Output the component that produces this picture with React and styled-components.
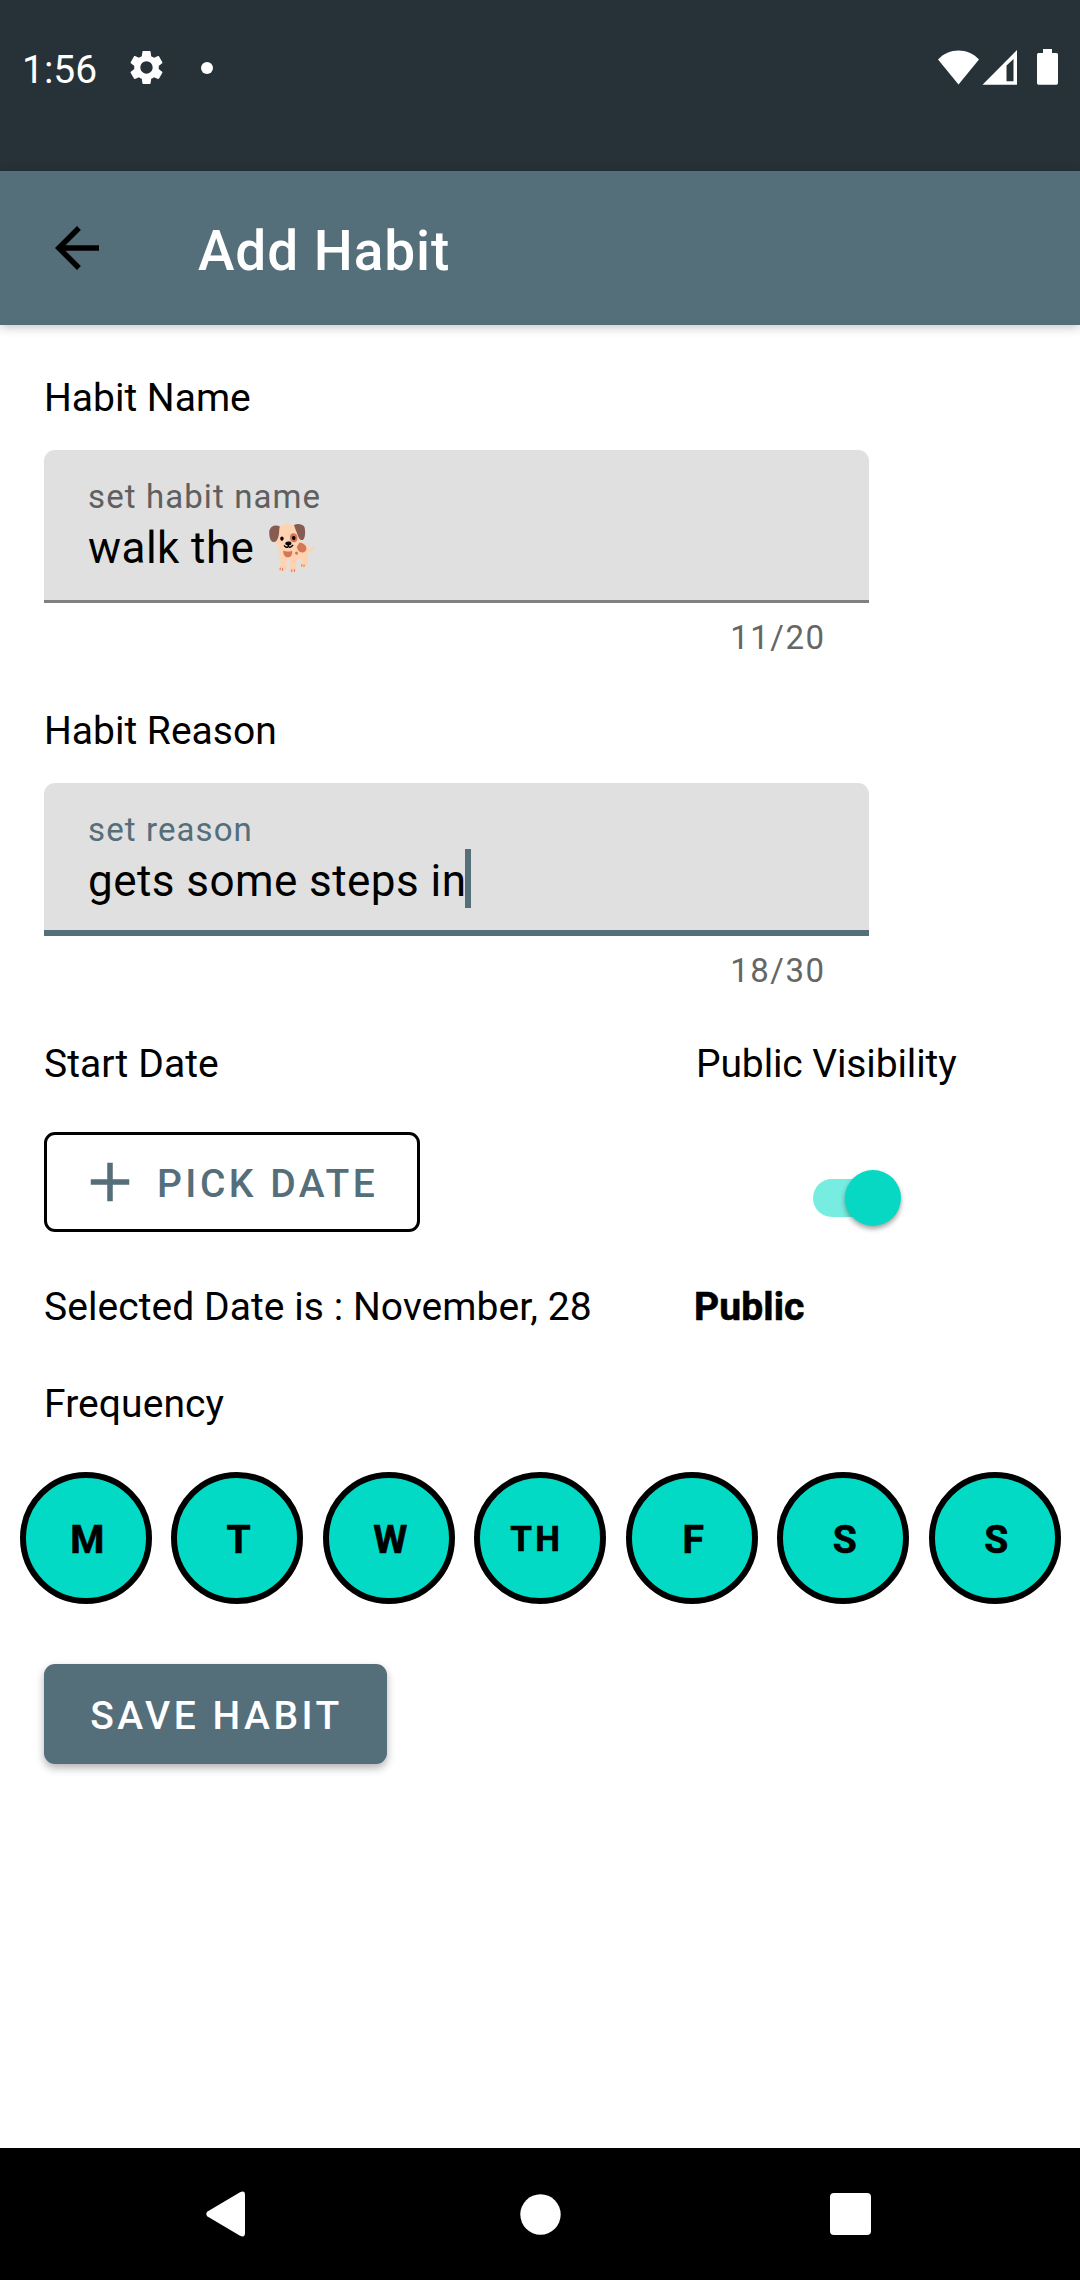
import React from "react";
import styled, { createGlobalStyle } from "styled-components";

const slate = "#546e7a";
const teal = "#03dac5";

const GlobalStyle = createGlobalStyle`
  * { box-sizing: border-box; }
  body {
    margin: 0;
    background: #fff;
    font-family: Roboto, "Noto Sans", sans-serif;
    color: #000;
  }
`;

const Screen = styled.div`
  width: 1080px;
  height: 2280px;
  display: flex;
  flex-direction: column;
  background: #fff;
  overflow: hidden;
`;

const StatusBar = styled.header`
  height: 171px;
  flex: none;
  padding: 42px 17px 0 22px;
  display: flex;
  justify-content: space-between;
  align-items: flex-start;
  background: #263238;
  color: #fff;
`;

const StatusGroup = styled.div`
  display: flex;
  align-items: center;
  height: 51px;
`;

const Clock = styled.span`
  width: 104px;
  padding-top: 5px;
  font-size: 39px;
  line-height: 54px;
`;

const Dot = styled.span`
  width: 12px;
  height: 12px;
  margin-left: 34px;
  border-radius: 50%;
  background: #fff;
`;

const StatusIcons = styled.svg`
  display: block;
`;

const AppBar = styled.div`
  height: 154px;
  flex: none;
  padding-left: 44px;
  display: flex;
  align-items: center;
  background: ${slate};
  box-shadow: 0 2px 10px rgba(0, 0, 0, 0.24);
`;

const Title = styled.h1`
  margin: 5px 0 0 88px;
  font-size: 55px;
  font-weight: 500;
  line-height: 64px;
  letter-spacing: 0.9px;
  color: #fff;
`;

const Form = styled.main`
  flex: 1;
  padding: 47px 0 0 44px;
`;

const Section = styled.section`
  height: 333px;
  width: 825px;
`;

const Label = styled.div`
  height: 52px;
  font-size: 39px;
  line-height: 52px;
  white-space: nowrap;
  font-weight: ${(p) => (p.$strong ? 700 : 400)};
  -webkit-text-stroke: ${(p) => (p.$strong ? 0.6 : 0)}px #000;
  letter-spacing: ${(p) => p.$tracking || 0}px;
  margin-top: ${(p) => p.$gap || 0}px;
  margin-left: ${(p) => p.$shift || 0}px;
`;

const Field = styled.div`
  height: 153px;
  margin-top: 26px;
  padding: 27px 44px 0;
  border-radius: 11px 11px 0 0;
  background: linear-gradient(
    to top,
    ${(p) => (p.$focused ? slate : "#808080")} ${(p) => (p.$focused ? 6 : 3)}px,
    #e0e0e0 ${(p) => (p.$focused ? 6 : 3)}px
  );
`;

const Hint = styled.div`
  height: 39px;
  font-size: 33px;
  line-height: 40px;
  letter-spacing: 1.1px;
  color: ${(p) => (p.$focused ? slate : "#5f5f5f")};
`;

const Value = styled.div`
  display: flex;
  align-items: flex-start;
  height: 59px;
  font-size: 44px;
  line-height: 65px;
  letter-spacing: 0.44px;
  white-space: pre;
`;

const Caret = styled.span`
  width: 6px;
  height: 59px;
  margin-left: -1px;
  background: ${slate};
`;

const Counter = styled.div`
  margin-top: 15px;
  padding-right: 43.5px;
  text-align: right;
  font-size: 33px;
  line-height: 40px;
  letter-spacing: 1.5px;
  color: #666;
`;

const Split = styled.div`
  display: grid;
  grid-template-columns: 652px 1fr;
`;

const OutlinedButton = styled.button`
  display: flex;
  align-items: center;
  gap: 14px;
  width: 376px;
  height: 100px;
  margin: 42px 0 0;
  padding: 0 0 0 30px;
  border: 3px solid #000;
  border-radius: 11px;
  background: #fff;
  color: ${slate};
  font: 500 39px/52px Roboto, sans-serif;
  letter-spacing: 3.48px;
  white-space: nowrap;
`;

const ButtonText = styled.span`
  padding-top: 4px;
`;

const Switch = styled.div`
  display: flex;
  align-items: center;
  width: 88px;
  height: 56px;
  margin: 80px 0 0 117px;
`;

const Track = styled.span`
  width: 80px;
  height: 38px;
  border-radius: 19px;
  background: #77ece0;
`;

const Thumb = styled.span`
  width: 56px;
  height: 56px;
  margin-left: -48px;
  border-radius: 50%;
  background: #06d8c3;
  box-shadow: 0 3px 5px rgba(0, 0, 0, 0.36);
`;

const Days = styled.div`
  display: flex;
  gap: 19.5px;
  margin: 42px 0 0 -24.3px;
`;

const Day = styled.button`
  width: 132px;
  height: 132px;
  flex: none;
  display: flex;
  align-items: center;
  justify-content: center;
  padding: 4px 0 0 ${(p) => (p.$small ? 0 : 3)}px;
  border: 6px solid #000;
  border-radius: 50%;
  background: ${teal};
  color: #000;
  font: 700 ${(p) => (p.$small ? 35 : 39)}px/52px Roboto, sans-serif;
  -webkit-text-stroke: 0.6px #000;
  letter-spacing: ${(p) => (p.$small ? 3.2 : 0)}px;
  text-indent: ${(p) => (p.$small ? -7 : 0)}px;
`;

const SaveButton = styled.button`
  width: 343px;
  height: 100px;
  margin: 60px 0 0;
  padding: 4px 0 0 2px;
  border: 0;
  border-radius: 11px;
  background: ${slate};
  color: #fff;
  font: 500 39px/52px Roboto, sans-serif;
  letter-spacing: 3.5px;
  white-space: nowrap;
  box-shadow: 0 4px 8px rgba(0, 0, 0, 0.3);
`;

const NavBar = styled.nav`
  height: 132px;
  flex: none;
  display: flex;
  align-items: center;
  justify-content: space-between;
  padding: 0 209px 0 206px;
  background: #000;
`;

const HomeIcon = styled.svg`
  margin-left: 5px;
`;

const days = ["M", "T", "W", "TH", "F", "S", "S"];

const Gear = () => (
  <svg width="41" height="41" viewBox="0 0 24 24" fill="#fff">
    <path d="M19.14 12.94c.04-.3.06-.61.06-.94 0-.32-.02-.64-.07-.94l2.03-1.58c.18-.14.23-.41.12-.61l-1.92-3.32c-.12-.22-.37-.29-.59-.22l-2.39.96c-.5-.38-1.03-.7-1.62-.94l-.36-2.54c-.04-.24-.24-.41-.48-.41h-3.84c-.24 0-.43.17-.47.41l-.36 2.54c-.59.24-1.13.57-1.62.94l-2.39-.96c-.22-.08-.47 0-.59.22L2.74 8.87c-.12.21-.08.47.12.61l2.03 1.58c-.05.3-.09.63-.09.94s.02.64.07.94l-2.03 1.58c-.18.14-.23.41-.12.61l1.92 3.32c.12.22.37.29.59.22l2.39-.96c.5.38 1.03.7 1.62.94l.36 2.54c.05.24.24.41.48.41h3.84c.24 0 .44-.17.47-.41l.36-2.54c.59-.24 1.13-.56 1.62-.94l2.39.96c.22.08.47 0 .59-.22l1.92-3.32c.12-.22.07-.47-.12-.61l-2.01-1.58zM12 15.6c-1.98 0-3.6-1.62-3.6-3.6s1.62-3.6 3.6-3.6 3.6 1.62 3.6 3.6-1.62 3.6-3.6 3.6z" />
  </svg>
);

function TextField({ label, hint, value, count, focused }) {
  return (
    <Section>
      <Label>{label}</Label>
      <Field $focused={focused}>
        <Hint $focused={focused}>{hint}</Hint>
        <Value>
          {value}
          {focused && <Caret />}
        </Value>
      </Field>
      <Counter>{count}</Counter>
    </Section>
  );
}

export default function App() {
  return (
    <Screen>
      <GlobalStyle />
      <StatusBar>
        <StatusGroup>
          <Clock>1:56</Clock>
          <Gear />
          <Dot />
        </StatusGroup>
        <StatusIcons width="125" height="51" viewBox="938 42 125 51" fill="#fff">
          <path d="M938 59.5C949 47.5 968 47.5 979 59.5L958.5 84.5Z" />
          <path fillRule="evenodd" d="M982.5 84.8L1017 50V84.8ZM1006.5 65.5V81.2H1013.5V59Z" />
          <path d="M1043 49h9v4h4.500q1.500 0 1.500 1.500v28.500q0 1.700-1.500 1.700h-18q-1.500 0-1.500-1.700v-28.500q0-1.500 1.500-1.500h4.500z" />
        </StatusIcons>
      </StatusBar>
      <AppBar>
        <svg width="66" height="66" viewBox="0 0 24 24">
          <path d="M20 11H7.83l5.590-5.590L12 4l-8 8 8 8 1.410-1.410L7.830 13H20v-2z" />
        </svg>
        <Title>Add Habit</Title>
      </AppBar>
      <Form>
        <TextField label="Habit Name" hint="set habit name" value="walk the 🐕" count="11/20" />
        <TextField label="Habit Reason" hint="set reason" value="gets some steps in" count="18/30" focused />
        <Split>
          <div>
            <Label $tracking={0.08}>Start Date</Label>
            <OutlinedButton>
              <svg width="66" height="66" viewBox="0 0 24 24" fill={slate}>
                <path d="M19 13h-6v6h-2v-6H5v-2h6V5h2v6h6v2z" />
              </svg>
              <ButtonText>PICK DATE</ButtonText>
            </OutlinedButton>
            <Label $gap={49} $tracking={0.06}>Selected Date is : November, 28</Label>
          </div>
          <div>
            <Label $tracking={-0.12}>Public Visibility</Label>
            <Switch>
              <Track />
              <Thumb />
            </Switch>
            <Label $gap={55} $shift={-2} $tracking={0.1} $strong>Public</Label>
          </div>
        </Split>
        <Label $gap={45} $tracking={0.08}>Frequency</Label>
        <Days>
          {days.map((d, i) => (
            <Day key={i} $small={d.length > 1}>{d}</Day>
          ))}
        </Days>
        <SaveButton>SAVE HABIT</SaveButton>
      </Form>
      <NavBar>
        <svg width="39" height="46" viewBox="0 0 39 46" fill="#fff">
          <path d="M1.500 20.500L34 1.300Q39-1 39 4V42Q39 47 34 44.700L1.500 25.500Q-1 23 1.500 20.500Z" />
        </svg>
        <HomeIcon width="41" height="41" viewBox="0 0 41 41" fill="#fff">
          <circle cx="20.500" cy="20.500" r="20.200" />
        </HomeIcon>
        <svg width="41" height="42" viewBox="0 0 41 42" fill="#fff">
          <rect width="41" height="42" rx="4" />
        </svg>
      </NavBar>
    </Screen>
  );
}
